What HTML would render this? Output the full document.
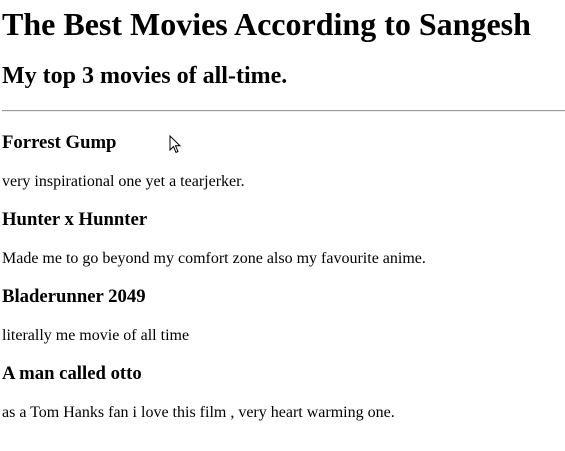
<!DOCTYPE html>
<html><head><meta charset="utf-8"><style>
html,body{margin:0;padding:0;background:#fff;}
body{font-family:"Liberation Serif",serif;color:#000;padding:0 0 0 2px;width:563px;overflow:hidden;height:445px;}
h1{font-size:32px;margin:6px 0 0;line-height:36px;}
h2{font-size:24px;margin:21px 0 0;line-height:27px;}
hr{margin:20px 0 0;border:0;border-top:1px solid #9a9a9a;border-bottom:1px solid #eee;height:0;}
h3{font-size:18.72px;margin:20px 0 0;line-height:21px;}
h3+p{margin-top:20px;}
p{font-size:16px;margin:0;line-height:18px;}
p+h3{margin-top:18px;}
.cur{position:absolute;left:169px;top:135px;}
</style></head><body>
<h1>The Best Movies According to Sangesh</h1>
<h2>My top 3 movies of all-time.</h2>
<hr>
<h3>Forrest Gump</h3>
<p>very inspirational one yet a tearjerker.</p>
<h3>Hunter x Hunnter</h3>
<p>Made me to go beyond my comfort zone also my favourite anime.</p>
<h3>Bladerunner 2049</h3>
<p>literally me movie of all time</p>
<h3>A man called otto</h3>
<p>as a Tom Hanks fan i love this film , very heart warming one.</p>
<svg class="cur" width="14" height="20" viewBox="0 0 14 20"><path d="M1 1 L1 15 L4.5 11.5 L7 17.5 L9 16.5 L6.5 10.8 L11 10.8 Z" fill="#fff" stroke="#000" stroke-width="1"/></svg>
</body></html>
